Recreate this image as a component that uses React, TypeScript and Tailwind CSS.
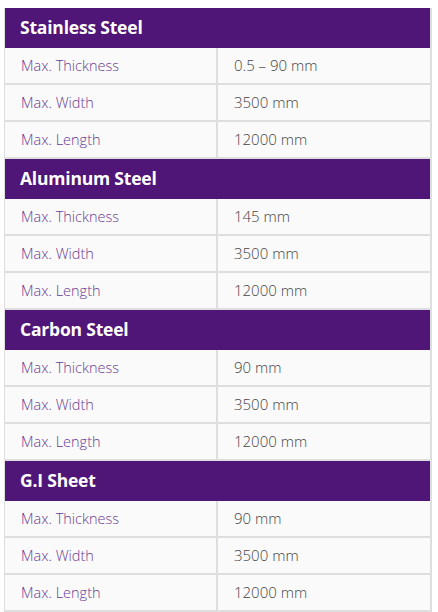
const sections = [
  { title: 'Stainless Steel', rows: [['Max. Thickness', '0.5 – 90 mm'], ['Max. Width', '3500 mm'], ['Max. Length', '12000 mm']] },
  { title: 'Aluminum Steel', rows: [['Max. Thickness', '145 mm'], ['Max. Width', '3500 mm'], ['Max. Length', '12000 mm']] },
  { title: 'Carbon Steel', rows: [['Max. Thickness', '90 mm'], ['Max. Width', '3500 mm'], ['Max. Length', '12000 mm']] },
  { title: 'G.I Sheet', rows: [['Max. Thickness', '90 mm'], ['Max. Width', '3500 mm'], ['Max. Length', '12000 mm']] },
]

export default function App() {
  return (
    <div className="bg-white w-[438px] h-[612px] pt-2 pl-1 font-['Open_Sans',sans-serif]">
      <div className="w-[428px] border-l border-r-2 border-[#dedede]">
        {sections.map((s) => (
          <div key={s.title}>
            <div className="h-10 bg-[#4f1577] flex items-center pl-[15px] pb-px text-white font-bold text-[17.5px] tracking-[-0.2px]">
              {s.title}
            </div>
            {s.rows.map(([label, value]) => (
              <div key={label} className="h-[37px] flex bg-[#fafafa] border-b-2 border-[#dedede]">
                <div className="w-[213px] flex items-center pl-4 text-[14.5px] text-[#6b3a92] font-light border-r-2 border-[#dedede]">
                  {label}
                </div>
                <div className="flex-1 flex items-center pl-4 text-[15px] text-[#454545] font-light">
                  {value}
                </div>
              </div>
            ))}
          </div>
        ))}
      </div>
    </div>
  )
}
